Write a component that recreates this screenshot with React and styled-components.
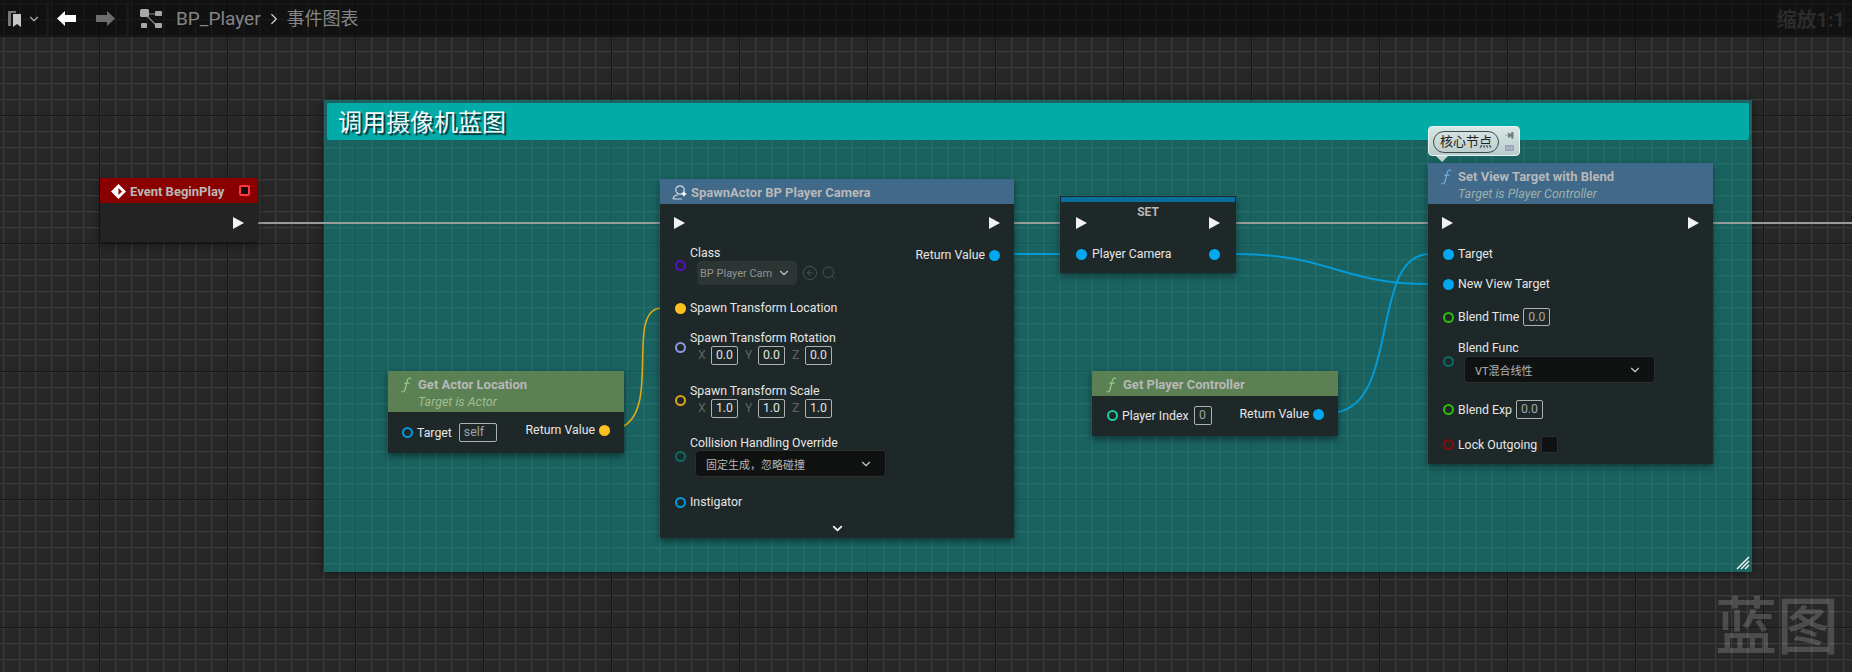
import styled, { createGlobalStyle } from "styled-components";
import { ChevronDown, ChevronRight, Search, CircleArrowLeft } from "lucide-react";

const GlobalStyle = createGlobalStyle`
  html, body {
    margin: 0;
    background: #272727;
    overflow: hidden;
  }
  #root {
    width: 1852px;
    height: 672px;
  }
`;

const FONT = `Roboto, "Noto Sans CJK SC", sans-serif`;

const Canvas = styled.div`
  position: relative;
  width: 1852px;
  height: 672px;
  overflow: hidden;
  font-family: ${FONT};
  background-color: #272727;
  background-image:
    linear-gradient(90deg, #181818 1px, transparent 1px),
    linear-gradient(180deg, #181818 1px, transparent 1px),
    linear-gradient(90deg, #3b3b3b 1px, #2e2e2e 1px, #2e2e2e 2px, transparent 2px),
    linear-gradient(180deg, #3b3b3b 1px, #2e2e2e 1px, #2e2e2e 2px, transparent 2px);
  background-size: 128px 128px, 128px 128px, 16px 16px, 16px 16px;
  background-position: 99px 0, 0 115px, 3px 0, 0 3px;
`;

const Toolbar = styled.header`
  position: absolute;
  inset: 0 0 auto 0;
  height: 37px;
  display: flex;
  align-items: center;
  background: rgba(0, 0, 0, 0.55);
  z-index: 5;
`;

const ToolGroup = styled.div`
  display: flex;
  align-items: center;
  height: 33px;
  gap: ${(p) => p.$gap || 0}px;
  padding: ${(p) => p.$pad || "0"};
  border-right: ${(p) => (p.$sep ? "3px solid #1a1a1a" : "none")};
`;

const Crumb = styled.span`
  font-size: ${(p) => p.$size || 19}px;
  color: #858585;
  line-height: 1;
`;

const Zoom = styled.span`
  margin-left: auto;
  margin-right: 7px;
  font-size: 20px;
  font-weight: 700;
  color: #2c2c2c;
`;

const Watermark = styled.div`
  position: absolute;
  right: 13px;
  bottom: 9px;
  font-size: 62px;
  letter-spacing: 0;
  line-height: 70px;
  font-weight: 500;
  color: rgba(255, 255, 255, 0.18);
`;

const CommentBox = styled.section`
  position: absolute;
  left: 324px;
  top: 100px;
  width: 1428px;
  height: 472px;
  padding: 3px;
  box-sizing: border-box;
  background: rgba(10, 175, 170, 0.44);
  box-shadow: 0 0 8px rgba(0, 0, 0, 0.45);
`;

const CommentTitle = styled.h2`
  margin: 0;
  height: 37px;
  padding-left: 11px;
  border-radius: 2px;
  background: #00aba8;
  font-size: 24px;
  font-weight: 400;
  line-height: 40px;
  color: #f4f8f8;
  text-shadow: 2px 2px 1px #0b3233;
`;

const Resize = styled.svg`
  position: absolute;
  right: 2px;
  bottom: 2px;
`;

const Wires = styled.svg`
  position: absolute;
  inset: 0;
`;

const Node = styled.article`
  position: absolute;
  left: ${(p) => p.$x}px;
  top: ${(p) => p.$y}px;
  width: ${(p) => p.$w}px;
  background: ${(p) => (p.$plain ? "#232323" : "#1f2828")};
  box-shadow: 0 3px 7px rgba(0, 0, 0, 0.45);
  font-size: 12.3px;
  color: #e6e6e6;
`;

const Header = styled.div`
  display: flex;
  align-items: flex-start;
  gap: ${(p) => p.$gap || 6}px;
  height: ${(p) => p.$h || 25}px;
  box-sizing: border-box;
  padding: 6px ${(p) => p.$pr || 10}px 0 ${(p) => p.$pl || 12}px;
  background: ${(p) => p.$bg};
`;

const HeaderText = styled.div`
  display: flex;
  flex-direction: column;
  flex: 1;
`;

const Title = styled.div`
  flex: ${(p) => (p.$grow ? 1 : "none")};
  font-size: 13px;
  line-height: 16px;
  font-weight: 700;
  color: #b8b8b8;
`;

const Sub = styled.div`
  font-size: 12.5px;
  line-height: 16px;
  margin-top: 1px;
  font-style: italic;
  color: ${(p) => p.$color};
`;

const SetBar = styled.div`
  height: 5px;
  margin: 1px 1px 0;
  background: #066f9e;
`;

const SetTitle = styled.div`
  position: absolute;
  left: 0;
  right: 0;
  top: 8px;
  text-align: center;
  font-size: 12px;
  font-weight: 700;
  line-height: 16px;
  color: #b8b8b8;
`;

const ExecRow = styled.div`
  display: flex;
  justify-content: ${(p) => (p.$end ? "flex-end" : "space-between")};
  align-items: center;
  height: ${(p) => p.$h || 38}px;
  padding: 0 ${(p) => p.$pad || 14}px;
`;

const Exec = styled.i`
  display: block;
  width: 0;
  height: 0;
  border-left: 11px solid #f2f2f2;
  border-top: 6px solid transparent;
  border-bottom: 6px solid transparent;
`;

const Columns = styled.div`
  display: flex;
  justify-content: space-between;
  align-items: flex-start;
  padding: ${(p) => p.$pad};
`;

const Rows = styled.div`
  display: flex;
  flex-direction: column;
  align-items: flex-start;
  padding: ${(p) => p.$pad || 0};
`;

const Row = styled.div`
  display: flex;
  align-items: center;
  gap: ${(p) => p.$gap ?? 4}px;
  margin-top: ${(p) => p.$mt || 0}px;
`;

const Pin = styled.i`
  display: block;
  flex: none;
  width: 11px;
  height: 11px;
  box-sizing: border-box;
  border-radius: 50%;
  border: 2px solid ${(p) => p.$color};
  background: ${(p) => (p.$on ? p.$color : "transparent")};
  margin-top: ${(p) => p.$mt || 0}px;
`;

const Label = styled.span`
  font-size: 12.3px;
  line-height: 16px;
  white-space: nowrap;
`;

const Stack = styled.div`
  display: flex;
  flex-direction: column;
  align-items: flex-start;
`;

const Inline = styled.div`
  display: flex;
  align-items: center;
  gap: 5px;
  margin-left: ${(p) => p.$ml || 0}px;
`;

const Field = styled.span`
  display: block;
  box-sizing: border-box;
  width: ${(p) => p.$w || 27}px;
  height: ${(p) => p.$h || 19}px;
  border: 1px solid #b0b0b0;
  border-radius: 2px;
  margin-left: ${(p) => p.$ml || 0}px;
  text-align: ${(p) => p.$align || "center"};
  padding-left: ${(p) => (p.$align ? 4 : 0)}px;
  font-size: 12.3px;
  line-height: 17px;
  color: ${(p) => p.$color || "#e0e0e0"};
`;

const Axis = styled.span`
  width: 8px;
  font-size: 12.3px;
  line-height: 19px;
  color: #5e6464;
  margin-left: ${(p) => (p.$first ? 0 : 2)}px;
`;

const Combo = styled.div`
  display: flex;
  align-items: center;
  justify-content: space-between;
  box-sizing: border-box;
  width: ${(p) => p.$w}px;
  height: ${(p) => p.$h}px;
  margin-left: ${(p) => p.$ml}px;
  margin-top: ${(p) => p.$mt || 0}px;
  padding: 0 ${(p) => p.$pr || 12}px 0 ${(p) => p.$pl || 10}px;
  background: ${(p) => (p.$dim ? "#2d3434" : "#101212")};
  border: 1px solid ${(p) => (p.$dim ? "#2d3434" : "#2a2f2f")};
  border-radius: 4px;
  font-size: 11px;
  color: ${(p) => (p.$dim ? "#8f9595" : "#b5b5b5")};
  white-space: nowrap;
`;

const ClassTools = styled.div`
  display: flex;
  align-items: center;
  gap: 3px;
  color: #4b5252;
`;

const Check = styled.span`
  display: block;
  width: 17px;
  height: 17px;
  box-sizing: border-box;
  border: 1px solid #2a2f2f;
  border-radius: 2px;
  background: #101212;
`;

const More = styled.div`
  display: flex;
  justify-content: center;
  height: 17px;
  padding-top: 11px;
  color: #f0f0f0;
`;

const Stop = styled.span`
  display: block;
  box-sizing: border-box;
  width: 11px;
  height: 11px;
  margin-top: 1px;
  border: 2px solid #ff3a3f;
  border-radius: 2px;
  background: #170b0b;
`;

const Bubble = styled.aside`
  position: absolute;
  left: 1428px;
  top: 126px;
  width: 92px;
  height: 30px;
  box-sizing: border-box;
  padding: 4px 4px;
  display: flex;
  gap: 5px;
  border: 1px solid #e8f2f0;
  border-radius: 4px;
  background: linear-gradient(#d8e8e6, #b9cccb);
  &::after {
    content: "";
    position: absolute;
    left: 7px;
    top: 29px;
    border-left: 6px solid transparent;
    border-right: 6px solid transparent;
    border-top: 6px solid #c3d5d3;
  }
`;

const Pill = styled.span`
  display: block;
  box-sizing: border-box;
  width: 70px;
  height: 22px;
  border: 1px solid #3e4a4a;
  border-radius: 11px;
  text-align: center;
  font-size: 13px;
  line-height: 20px;
  color: #1e2222;
`;

const BubbleTools = styled.div`
  display: flex;
  flex-direction: column;
  gap: 6px;
  padding-top: 1px;
`;

const FnIcon = ({ color }) => (
  <svg width="11" height="16" viewBox="0 0 11 16" fill="none" stroke={color} strokeWidth="1.1">
    <path d="M10 1.5C8 .6 6.8 1.4 6.3 3.6L4 12.5C3.5 14.6 2.2 15.4.6 14.6" />
    <path d="M3.2 6.2h5.4" />
  </svg>
);

const Vector = ({ label, v }) => (
  <>
    <Axis $first={label === "X"}>{label}</Axis>
    <Field>{v}</Field>
  </>
);

const Triple = ({ v }) => (
  <Inline $ml={8}>
    <Vector label="X" v={v} />
    <Vector label="Y" v={v} />
    <Vector label="Z" v={v} />
  </Inline>
);

const BlueprintGraph = () => (
  <Canvas>
    <GlobalStyle />

    <CommentBox>
      <CommentTitle>调用摄像机蓝图</CommentTitle>
      <Resize width="14" height="14" viewBox="0 0 14 14" stroke="#f2f2f2" strokeWidth="1.5">
        <path d="M1 13 13 1M5 13l8-8M9 13l4-4" />
      </Resize>
    </CommentBox>

    <Wires width="1852" height="672" fill="none">
      <path d="M258 223H1852" stroke="#969d9b" strokeWidth="2" />
      <path d="M1014 254H1060" stroke="#049ad6" strokeWidth="2" />
      <path d="M1236 254C1330 254 1340 284 1430 284" stroke="#049ad6" strokeWidth="2" />
      <path d="M1338 412C1400 400 1370 254 1430 254" stroke="#049ad6" strokeWidth="2" />
      <path d="M624 426C660 405 625 308 662 308" stroke="#d7a91b" strokeWidth="1.6" />
    </Wires>

    <Toolbar>
      <ToolGroup $sep $gap={5} $pad="0 0 0 8px">
        <svg width="14" height="17" viewBox="0 0 14 17">
          <path d="M0 1h8v2H3v13H0z" fill="#777" />
          <path d="M5 4h8v13l-4-3-4 3z" fill="#c8c8c8" />
        </svg>
        <ChevronDown size={14} color="#b0b0b0" strokeWidth={2} style={{ marginRight: 5 }} />
      </ToolGroup>
      <ToolGroup $sep $gap={20} $pad="0 11px 0 8px">
        <svg width="19" height="15" viewBox="0 0 19 15">
          <path d="M0 7.5 8 0v4h11v7H8v4z" fill="#fff" />
        </svg>
        <svg width="19" height="15" viewBox="0 0 19 15">
          <path d="M19 7.5 11 0v4H0v7h11v4z" fill="#6d6d6d" />
        </svg>
      </ToolGroup>
      <ToolGroup $gap={9} $pad="0 0 0 11px">
        <svg width="22" height="20" viewBox="0 0 22 20" style={{ marginRight: 5 }}>
          <path d="M7 5 17 5M6 6l10 10" stroke="#8a8a8a" strokeWidth="1.2" />
          <rect x="0" y="0" width="9" height="8" rx="1.5" fill="#a8a8a8" />
          <rect x="15" y="2" width="7" height="5" rx="1" fill="#a8a8a8" />
          <rect x="1" y="14" width="6" height="5" rx="1" fill="#a8a8a8" />
          <rect x="15" y="14" width="7" height="5" rx="1" fill="#a8a8a8" />
        </svg>
        <Crumb>BP_Player</Crumb>
        <ChevronRight size={18} color="#d0d0d0" strokeWidth={1.6} style={{ margin: "0 -5px" }} />
        <Crumb $size={18}>事件图表</Crumb>
      </ToolGroup>
      <Zoom>缩放1:1</Zoom>
    </Toolbar>

    <Node $x={100} $y={178} $w={158} $plain>
      <Header $bg="#8a0000" $gap={4} $pl={11} $pr={8}>
        <svg width="15" height="15" viewBox="0 0 15 15">
          <path d="M7.5 0 15 7.5 7.5 15 0 7.5z" fill="#fff" />
          <path d="M7.5 4 11 7.5 7.5 11z" fill="#8a0000" />
        </svg>
        <Title $grow>Event BeginPlay</Title>
        <Stop />
      </Header>
      <ExecRow $h={39} $end>
        <Exec />
      </ExecRow>
    </Node>

    <Node $x={388} $y={371} $w={236}>
      <Header $bg="#5a8053" $h={41} $pl={13} $gap={6}>
        <FnIcon color="#97d585" />
        <HeaderText>
          <Title>Get Actor Location</Title>
          <Sub $color="#a4bc90">Target is Actor</Sub>
        </HeaderText>
      </Header>
      <Columns $pad="10px 14px 11px 14px">
        <Row $mt={1}>
          <Pin $color="#049ae0" />
          <Label>Target</Label>
          <Field $w={38} $ml={3} $align="left" $color="#a0a5a5">self</Field>
        </Row>
        <Row>
          <Label>Return Value</Label>
          <Pin $color="#fdc120" $on />
        </Row>
      </Columns>
    </Node>

    <Node $x={660} $y={179} $w={354}>
      <Header $bg="#41698a" $gap={3}>
        <svg width="16" height="15" viewBox="0 0 16 15" fill="none" stroke="#cfd8df" strokeWidth="1.2">
          <circle cx="8" cy="5" r="4.2" />
          <path d="M1 14c.6-3 2.5-4 5-4M1 14h9" />
          <path d="M12 6l1 2 2 1-2 1-1 2-1-2-2-1 2-1z" fill="#fff" stroke="none" />
        </svg>
        <Title>SpawnActor BP Player Camera</Title>
      </Header>
      <ExecRow>
        <Exec />
        <Exec />
      </ExecRow>
      <Columns $pad="3px 14px 0 15px">
        <Rows>
          <Row>
            <Pin $color="#5a10c0" />
            <Stack>
              <Label>Class</Label>
              <Inline>
                <Combo $dim $w={100} $h={24} $ml={7} $pl={2} $pr={5}>
                  <span>BP Player Cam</span>
                  <ChevronDown size={14} color="#c0c0c0" style={{ flex: "none" }} />
                </Combo>
                <ClassTools>
                  <CircleArrowLeft size={16} strokeWidth={1.4} />
                  <Search size={16} strokeWidth={1.4} />
                </ClassTools>
              </Inline>
            </Stack>
          </Row>
          <Row $mt={15}>
            <Pin $color="#fdc120" $on />
            <Label>Spawn Transform Location</Label>
          </Row>
          <Row $mt={14}>
            <Pin $color="#8b97e0" />
            <Stack>
              <Label>Spawn Transform Rotation</Label>
              <Triple v="0.0" />
            </Stack>
          </Row>
          <Row $mt={18}>
            <Pin $color="#d9a51a" />
            <Stack>
              <Label>Spawn Transform Scale</Label>
              <Triple v="1.0" />
            </Stack>
          </Row>
          <Row $mt={17}>
            <Pin $color="#0b6b66" />
            <Stack>
              <Label>Collision Handling Override</Label>
              <Combo $w={191} $h={27} $ml={5} $mt={-1}>
                <span>固定生成，忽略碰撞</span>
                <ChevronDown size={14} color="#c8c8c8" />
              </Combo>
            </Stack>
          </Row>
          <Row $mt={17}>
            <Pin $color="#049ae0" />
            <Label>Instigator</Label>
          </Row>
        </Rows>
        <Row $mt={2}>
          <Label>Return Value</Label>
          <Pin $color="#02a7f0" $on />
        </Row>
      </Columns>
      <More>
        <ChevronDown size={15} strokeWidth={3} />
      </More>
    </Node>

    <Node $x={1060} $y={196} $w={176}>
      <SetBar />
      <SetTitle>SET</SetTitle>
      <ExecRow $h={42} $pad={16}>
        <Exec />
        <Exec />
      </ExecRow>
      <Columns $pad="2px 16px 11px 16px">
        <Row $gap={5}>
          <Pin $color="#02a7f0" $on />
          <Label>Player Camera</Label>
        </Row>
        <Pin $color="#02a7f0" $on $mt={3} />
      </Columns>
    </Node>

    <Node $x={1092} $y={371} $w={246}>
      <Header $bg="#5a8053" $pl={14} $gap={6}>
        <FnIcon color="#97d585" />
        <Title>Get Player Controller</Title>
      </Header>
      <Columns $pad="10px 14px 11px 15px">
        <Row>
          <Pin $color="#20c9a0" />
          <Label>Player Index</Label>
          <Field $w={18} $ml={1} $color="#a0a5a5">0</Field>
        </Row>
        <Row>
          <Label>Return Value</Label>
          <Pin $color="#02a7f0" $on />
        </Row>
      </Columns>
    </Node>

    <Bubble>
      <Pill>核心节点</Pill>
      <BubbleTools>
        <svg width="11" height="8" viewBox="0 0 11 8">
          <path d="M0 4h4M4 1l4 2V0h2v8H8V5L4 7z" fill="#6f7c7c" stroke="#6f7c7c" strokeWidth=".6" />
        </svg>
        <svg width="11" height="8" viewBox="0 0 11 8">
          <rect width="11" height="8" fill="#9aa6b4" />
          <path d="M2 4h2M5 4h1M7 4h2" stroke="#e4e8ec" />
        </svg>
      </BubbleTools>
    </Bubble>

    <Node $x={1428} $y={163} $w={285}>
      <Header $bg="#41698a" $h={41} $pl={13} $gap={6}>
        <FnIcon color="#6fb4e8" />
        <HeaderText>
          <Title>Set View Target with Blend</Title>
          <Sub $color="#9db0ac">Target is Player Controller</Sub>
        </HeaderText>
      </Header>
      <ExecRow $pad={14}>
        <Exec />
        <Exec />
      </ExecRow>
      <Rows $pad="4px 0 11px 15px">
        <Row>
          <Pin $color="#02a7f0" $on />
          <Label>Target</Label>
        </Row>
        <Row $mt={14}>
          <Pin $color="#02a7f0" $on />
          <Label>New View Target</Label>
        </Row>
        <Row $mt={16}>
          <Pin $color="#2fbb0a" />
          <Label>Blend Time</Label>
          <Field $h={18} $color="#a0a5a5">0.0</Field>
        </Row>
        <Row $mt={14}>
          <Pin $color="#0b6b66" />
          <Stack>
            <Label>Blend Func</Label>
            <Combo $w={191} $h={27} $ml={6}>
              <span>VT混合线性</span>
              <ChevronDown size={14} color="#c8c8c8" />
            </Combo>
          </Stack>
        </Row>
        <Row $mt={17}>
          <Pin $color="#2fbb0a" />
          <Label>Blend Exp</Label>
          <Field $color="#a0a5a5">0.0</Field>
        </Row>
        <Row $mt={17}>
          <Pin $color="#8a0a0a" />
          <Label>Lock Outgoing</Label>
          <Check />
        </Row>
      </Rows>
    </Node>

    <Watermark>蓝图</Watermark>
  </Canvas>
);

export default function App() {
  return <BlueprintGraph />;
}
